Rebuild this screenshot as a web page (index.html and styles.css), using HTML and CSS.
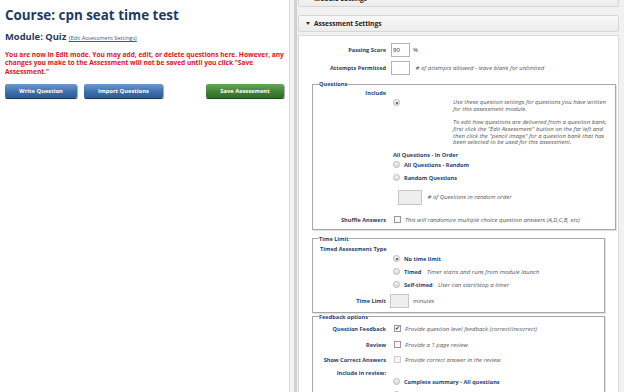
FILE: index.html
```html
<!DOCTYPE html>
<html lang="en">
<head>
    <meta charset="UTF-8">
    <title>Edit Assessment</title>
    <link rel="stylesheet" href="styles.css">
</head>
<body>

    <div class="left">
        <h1>Course: cpn seat time test</h1>
        <h2>Module: Quiz <a href="#">(Edit Assessment Settings)</a></h2>
        <p class="warning">You are now in Edit mode. You may add, edit, or delete questions here. However, any changes you make to the Assessment will not be saved until you click "Save Assessment."</p>
        <div class="buttons">
            <button class="btn blue">Write Question</button>
            <button class="btn blue">Import Questions</button>
            <button class="btn green">Save Assessment</button>
        </div>
    </div>

    <div class="gutter"></div>

    <div class="right">
        <div class="bar module"><span class="arrow"></span>Module Settings</div>
        <div class="bar"><span class="arrow"></span>Assessment Settings</div>

        <div class="panel">
            <div class="row r-pass">
                <label>Passing Score</label>
                <div class="ctl"><span class="box">90</span><span class="plain">%</span></div>
            </div>
            <div class="row r-attempts">
                <label>Attempts Permitted</label>
                <div class="ctl"><span class="box"></span><span class="hint">&nbsp;# of attempts allowed - leave blank for unlimited</span></div>
            </div>

            <fieldset class="fs-questions">
                <legend>Questions</legend>
                <div class="row r-include">
                    <label>Include</label>
                </div>
                <div class="include-body">
                    <span class="radio on"></span>
                    <div class="desc">
                        <p>Use these question settings for questions you have written for this assessment module.</p>
                        <p>To edit how questions are delivered from a question bank; first click the "Edit Assessment" button on the far left and then click the "pencil image" for a question bank that has been selected to be used for this assessment.</p>
                    </div>
                </div>
                <div class="opt-title">All Questions - In Order</div>
                <div class="opt r-random"><span class="radio"></span><b>All Questions - Random</b></div>
                <div class="opt r-randq"><span class="radio"></span><b>Random Questions</b></div>
                <div class="count"><span class="box grey wide"></span><span class="hint">&nbsp;# of Questions in random order</span></div>
                <div class="row r-shuffle">
                    <label>Shuffle Answers</label>
                    <div class="ctl"><span class="check"></span><span class="hint">This will randomize multiple choice question answers (A,D,C,B, etc)</span></div>
                </div>
            </fieldset>

            <fieldset class="fs-time">
                <legend>Time Limit</legend>
                <div class="sub-title">Timed Assessment Type</div>
                <div class="opt r-none"><span class="radio on"></span><b>No time limit</b></div>
                <div class="opt r-timed"><span class="radio"></span><b>Timed</b><span class="hint">&nbsp;Timer starts and runs from module launch</span></div>
                <div class="opt r-self"><span class="radio"></span><b>Self-timed</b><span class="hint">&nbsp;User can start/stop a timer</span></div>
                <div class="row r-limit">
                    <label>Time Limit</label>
                    <div class="ctl"><span class="box grey"></span><span class="hint">minutes</span></div>
                </div>
            </fieldset>

            <fieldset class="fs-feedback">
                <legend>Feedback options</legend>
                <div class="row r-qf">
                    <label>Question Feedback</label>
                    <div class="ctl"><span class="check on">&#10004;</span><span class="hint">Provide question level feedback (correct/incorrect)</span></div>
                </div>
                <div class="row r-review">
                    <label>Review</label>
                    <div class="ctl"><span class="check"></span><span class="hint">Provide a 1 page review</span></div>
                </div>
                <div class="row r-show">
                    <label>Show Correct Answers</label>
                    <div class="ctl"><span class="check off"></span><span class="hint">Provide correct answer in the review</span></div>
                </div>
                <div class="row r-inc">
                    <label>Include in review:</label>
                </div>
                <div class="opt r-complete"><span class="radio"></span><b>Complete summary - All questions</b></div>
                <div class="opt r-next"><span class="radio"></span><b>Incorrect questions only</b></div>
            </fieldset>
        </div>
    </div>

</body>
</html>
```

FILE: styles.css
```css
body {
    margin: 0;
    width: 624px;
    height: 392px;
    overflow: hidden;
    display: flex;
    font-family: "Open Sans", "Noto Sans", sans-serif;
    background: #ffffff;
}

/* Left column */
.left {
    flex-shrink: 0;
    width: 284px;
    padding: 7px 0 0 5px;
    border-right: 1px solid #dcdcdc;
}

h1 {
    margin: 0;
    font-size: 13.4px;
    line-height: 16px;
    color: #1e3b66;
}

h2 {
    margin: 8px 0 0;
    font-size: 9.4px;
    line-height: 12px;
    color: #1e3b66;
}

h2 a {
    font-size: 5.6px;
    line-height: 1;
    font-weight: normal;
    color: #3a5a8c;
}

.warning {
    margin: 7.5px 0 0;
    font-size: 6.6px;
    line-height: 8.6px;
    font-weight: bold;
    color: #e8101e;
}

.buttons {
    display: flex;
    margin-top: 7.5px;
}

.btn {
    height: 14px;
    padding: 0;
    border: none;
    border-radius: 2px;
    color: #ffffff;
    font-family: inherit;
    font-size: 5.8px;
    font-weight: bold;
    box-shadow: 0 1px 0 #1d3355, 1px 1px 1px rgba(0, 0, 0, 0.35);
}

.blue {
    width: 72px;
    margin-right: 7px;
    background: linear-gradient(#6e9ad0, #3e6fad 55%, #2e5b96);
}

.blue + .blue {
    width: 79px;
}

.green {
    width: 78px;
    margin-left: 36px;
    background: linear-gradient(#6aa55a, #3f8436 55%, #2f6d28);
    box-shadow: 0 1px 0 #1f4a1a, 1px 1px 1px rgba(0, 0, 0, 0.35);
}

/* Divider */
.gutter {
    flex-shrink: 0;
    width: 4px;
    background: #f3f3f3;
    border-right: 3px solid #d0d0d0;
}

/* Right column */
.right {
    flex: 1;
    min-width: 0;
    background: #f1f1f1;
    padding: 0 5px 0 1px;
}

.bar {
    height: 15px;
    border: 1px solid #d6d6d6;
    border-radius: 2px;
    background: linear-gradient(#f8f8f8, #ececec);
    font-size: 6.6px;
    font-weight: bold;
    line-height: 15px;
    color: #222222;
    padding-left: 7px;
    margin-bottom: 3px;
}

.bar.module {
    margin-top: -10px;
    margin-bottom: 8px;
}

.arrow {
    display: inline-block;
    width: 0;
    height: 0;
    border-left: 2px solid transparent;
    border-right: 2px solid transparent;
    border-top: 3px solid #333333;
    margin-right: 4px;
    vertical-align: 1px;
}

.panel {
    background: #ffffff;
    border: 1px solid #dadada;
    height: 400px;
    padding-top: 7px;
}

.row {
    display: flex;
    align-items: center;
}

.row label {
    width: 87px;
    text-align: right;
    flex-shrink: 0;
    font-size: 5.6px;
    line-height: 8px;
    font-weight: bold;
    color: #1f3f6d;
}

.ctl {
    display: flex;
    align-items: center;
    margin-left: 5px;
}

.box {
    display: inline-block;
    width: 16px;
    height: 12px;
    border: 1px solid #b4b4b4;
    font-size: 6px;
    line-height: 12px;
    padding-left: 1px;
    color: #222222;
    background: #ffffff;
}

.box.grey {
    background: #eeeeee;
    border-color: #c6c6c6;
}

.box.wide {
    width: 21px;
    height: 13px;
}

.plain {
    font-size: 6px;
    margin-left: 3px;
    color: #333333;
}

.hint {
    font-size: 6px;
    line-height: 8px;
    font-style: italic;
    color: #555555;
    margin-left: 4px;
    white-space: nowrap;
}

.r-attempts {
    margin-top: 4px;
}

fieldset {
    margin: 5px 13px 0 13px;
    padding: 0 6px 5px;
    border: 1px solid #a8a8a8;
    box-shadow: 1px 1px 0 #e2e2e2;
}

legend {
    padding: 0;
    font-size: 5.6px;
    line-height: 8px;
    font-weight: bold;
    color: #1f3f6d;
}

fieldset .row label {
    width: 67px;
}

.r-include {
    margin-top: 1px;
}

.include-body {
    display: flex;
    margin-top: 2px;
}

.radio {
    display: inline-block;
    width: 5px;
    height: 5px;
    border: 1px solid #b8b8b8;
    border-radius: 50%;
    background: linear-gradient(#f4f4f4, #dcdcdc);
    position: relative;
    flex-shrink: 0;
}

.radio.on::after {
    content: "";
    position: absolute;
    left: 1.5px;
    top: 1.5px;
    width: 2px;
    height: 2px;
    border-radius: 50%;
    background: #444444;
}

.include-body .radio {
    margin-left: 74px;
}

.desc {
    margin-left: 53px;
    width: 156px;
}

.desc p {
    margin: 0 0 6.7px;
    font-size: 6px;
    line-height: 6.7px;
    font-style: italic;
    color: #555555;
}

.desc p:last-child {
    margin-bottom: 0;
}

.opt-title {
    margin: 5px 0 0 74px;
    font-size: 5.6px;
    line-height: 8px;
    font-weight: bold;
    color: #1f3f6d;
}

.opt {
    display: flex;
    align-items: center;
    height: 8px;
    margin-left: 74px;
}

.opt b {
    font-size: 5.6px;
    line-height: 8px;
    color: #1f3f6d;
    margin-left: 4px;
}

.r-random {
    margin-top: 2px;
}

.r-randq {
    margin-top: 5px;
}

.count {
    display: flex;
    align-items: center;
    margin: 8px 0 0 79px;
}

.r-shuffle {
    margin-top: 11px;
}

.check {
    display: inline-block;
    width: 5px;
    height: 5px;
    border: 1px solid #9a9a9a;
    background: #f6f6f6;
    font-size: 6px;
    line-height: 5px;
    color: #333333;
    text-align: center;
    margin-left: 3px;
    flex-shrink: 0;
}

.check.off {
    border-color: #d0d0d0;
}

.fs-time {
    padding-bottom: 4px;
}

.sub-title {
    margin: 2px 0 0 1px;
    font-size: 5.6px;
    line-height: 8px;
    font-weight: bold;
    color: #1f3f6d;
}

.r-none {
    margin-top: 2px;
}

.r-timed,
.r-self {
    margin-top: 5px;
}

.r-limit {
    margin-top: 5px;
}

.r-limit .ctl {
    margin-left: 4px;
}

.fs-feedback {
    margin-top: 0;
}

.r-qf {
    margin-top: 4px;
}

.r-review {
    margin-top: 8px;
}

.r-show {
    margin-top: 7px;
}

.r-inc {
    margin-top: 5px;
}

.r-complete {
    margin-top: 1px;
}

.r-next {
    margin-top: 5px;
}
```
